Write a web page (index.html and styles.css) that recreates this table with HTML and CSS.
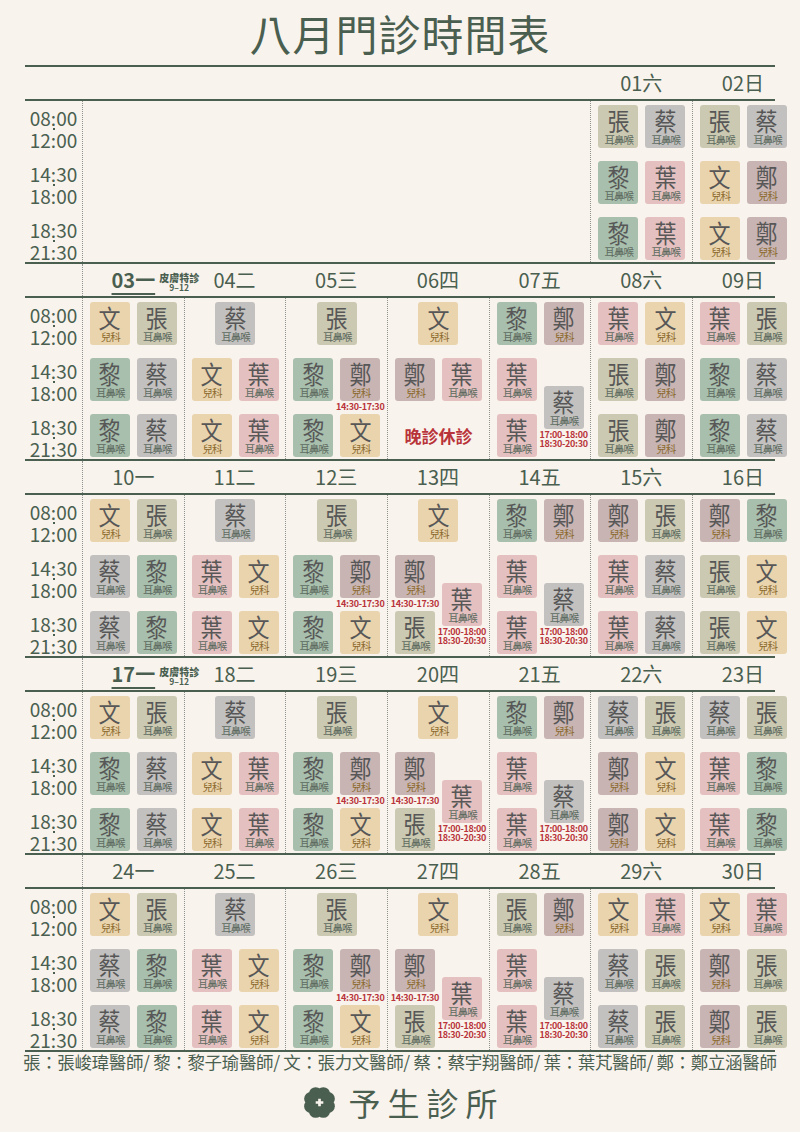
FILE: index.html
```html
<!DOCTYPE html>
<html lang="zh-Hant">
<head>
<meta charset="utf-8">
<title>八月門診時間表</title>
<link rel="stylesheet" href="styles.css">
</head>
<body>
<h1 class="title">八月門診時間表</h1>
<div class="sheet">

<section class="week">
  <div class="head">
    <div></div><div class="blank5"></div>
    <div class="dh">01六</div><div class="dh">02日</div>
  </div>
  <div class="body">
    <div class="times">
      <div class="t"><span>08:00</span><i></i><span>12:00</span></div>
      <div class="t"><span>14:30</span><i></i><span>18:00</span></div>
      <div class="t"><span>18:30</span><i></i><span>21:30</span></div>
    </div>
    <div class="blank5 line"></div>
    <div class="day">
      <div class="doc zh"><b>張</b><small>耳鼻喉</small></div>
      <div class="doc cai"><b>蔡</b><small>耳鼻喉</small></div>
      <div class="doc li"><b>黎</b><small>耳鼻喉</small></div>
      <div class="doc ye"><b>葉</b><small>耳鼻喉</small></div>
      <div class="doc li"><b>黎</b><small>耳鼻喉</small></div>
      <div class="doc ye"><b>葉</b><small>耳鼻喉</small></div>
    </div>
    <div class="day">
      <div class="doc zh"><b>張</b><small>耳鼻喉</small></div>
      <div class="doc cai"><b>蔡</b><small>耳鼻喉</small></div>
      <div class="doc wen"><b>文</b><small>兒科</small></div>
      <div class="doc zg"><b>鄭</b><small>兒科</small></div>
      <div class="doc wen"><b>文</b><small>兒科</small></div>
      <div class="doc zg"><b>鄭</b><small>兒科</small></div>
    </div>
  </div>
</section>

<section class="week">
  <div class="head">
    <div></div>
    <div class="dh"><span class="spday">03一<span class="tag"><b>皮膚特診</b><small>9–12</small></span></span></div>
    <div class="dh">04二</div><div class="dh">05三</div><div class="dh">06四</div>
    <div class="dh">07五</div><div class="dh">08六</div><div class="dh">09日</div>
  </div>
  <div class="body">
    <div class="times">
      <div class="t"><span>08:00</span><i></i><span>12:00</span></div>
      <div class="t"><span>14:30</span><i></i><span>18:00</span></div>
      <div class="t"><span>18:30</span><i></i><span>21:30</span></div>
    </div>
    <div class="day">
      <div class="doc wen"><b>文</b><small>兒科</small></div>
      <div class="doc zh"><b>張</b><small>耳鼻喉</small></div>
      <div class="doc li"><b>黎</b><small>耳鼻喉</small></div>
      <div class="doc cai"><b>蔡</b><small>耳鼻喉</small></div>
      <div class="doc li"><b>黎</b><small>耳鼻喉</small></div>
      <div class="doc cai"><b>蔡</b><small>耳鼻喉</small></div>
    </div>
    <div class="day">
      <div class="doc cai solo"><b>蔡</b><small>耳鼻喉</small></div>
      <div class="doc wen"><b>文</b><small>兒科</small></div>
      <div class="doc ye"><b>葉</b><small>耳鼻喉</small></div>
      <div class="doc wen"><b>文</b><small>兒科</small></div>
      <div class="doc ye"><b>葉</b><small>耳鼻喉</small></div>
    </div>
    <div class="day">
      <div class="doc zh solo"><b>張</b><small>耳鼻喉</small></div>
      <div class="doc li"><b>黎</b><small>耳鼻喉</small></div>
      <div class="doc zg"><b>鄭</b><small>兒科</small><span class="note">14:30-17:30</span></div>
      <div class="doc li"><b>黎</b><small>耳鼻喉</small></div>
      <div class="doc wen"><b>文</b><small>兒科</small></div>
    </div>
    <div class="day">
      <div class="doc wen solo"><b>文</b><small>兒科</small></div>
      <div class="doc zg"><b>鄭</b><small>兒科</small></div>
      <div class="doc ye"><b>葉</b><small>耳鼻喉</small></div>
      <div class="closed">晚診休診</div>
    </div>
    <div class="day">
      <div class="doc li"><b>黎</b><small>耳鼻喉</small></div>
      <div class="doc zg"><b>鄭</b><small>兒科</small></div>
      <div class="doc ye"><b>葉</b><small>耳鼻喉</small></div>
      <div class="doc cai mid"><b>蔡</b><small>耳鼻喉</small><span class="note">17:00-18:00<br>18:30-20:30</span></div>
      <div class="doc ye"><b>葉</b><small>耳鼻喉</small></div>
    </div>
    <div class="day">
      <div class="doc ye"><b>葉</b><small>耳鼻喉</small></div>
      <div class="doc wen"><b>文</b><small>兒科</small></div>
      <div class="doc zh"><b>張</b><small>耳鼻喉</small></div>
      <div class="doc zg"><b>鄭</b><small>兒科</small></div>
      <div class="doc zh"><b>張</b><small>耳鼻喉</small></div>
      <div class="doc zg"><b>鄭</b><small>兒科</small></div>
    </div>
    <div class="day">
      <div class="doc ye"><b>葉</b><small>耳鼻喉</small></div>
      <div class="doc zh"><b>張</b><small>耳鼻喉</small></div>
      <div class="doc li"><b>黎</b><small>耳鼻喉</small></div>
      <div class="doc cai"><b>蔡</b><small>耳鼻喉</small></div>
      <div class="doc li"><b>黎</b><small>耳鼻喉</small></div>
      <div class="doc cai"><b>蔡</b><small>耳鼻喉</small></div>
    </div>
  </div>
</section>

<section class="week">
  <div class="head">
    <div></div>
    <div class="dh">10一</div><div class="dh">11二</div><div class="dh">12三</div><div class="dh">13四</div>
    <div class="dh">14五</div><div class="dh">15六</div><div class="dh">16日</div>
  </div>
  <div class="body">
    <div class="times">
      <div class="t"><span>08:00</span><i></i><span>12:00</span></div>
      <div class="t"><span>14:30</span><i></i><span>18:00</span></div>
      <div class="t"><span>18:30</span><i></i><span>21:30</span></div>
    </div>
    <div class="day">
      <div class="doc wen"><b>文</b><small>兒科</small></div>
      <div class="doc zh"><b>張</b><small>耳鼻喉</small></div>
      <div class="doc cai"><b>蔡</b><small>耳鼻喉</small></div>
      <div class="doc li"><b>黎</b><small>耳鼻喉</small></div>
      <div class="doc cai"><b>蔡</b><small>耳鼻喉</small></div>
      <div class="doc li"><b>黎</b><small>耳鼻喉</small></div>
    </div>
    <div class="day">
      <div class="doc cai solo"><b>蔡</b><small>耳鼻喉</small></div>
      <div class="doc ye"><b>葉</b><small>耳鼻喉</small></div>
      <div class="doc wen"><b>文</b><small>兒科</small></div>
      <div class="doc ye"><b>葉</b><small>耳鼻喉</small></div>
      <div class="doc wen"><b>文</b><small>兒科</small></div>
    </div>
    <div class="day">
      <div class="doc zh solo"><b>張</b><small>耳鼻喉</small></div>
      <div class="doc li"><b>黎</b><small>耳鼻喉</small></div>
      <div class="doc zg"><b>鄭</b><small>兒科</small><span class="note">14:30-17:30</span></div>
      <div class="doc li"><b>黎</b><small>耳鼻喉</small></div>
      <div class="doc wen"><b>文</b><small>兒科</small></div>
    </div>
    <div class="day">
      <div class="doc wen solo"><b>文</b><small>兒科</small></div>
      <div class="doc zg"><b>鄭</b><small>兒科</small><span class="note">14:30-17:30</span></div>
      <div class="doc ye mid"><b>葉</b><small>耳鼻喉</small><span class="note">17:00-18:00<br>18:30-20:30</span></div>
      <div class="doc zh"><b>張</b><small>耳鼻喉</small></div>
    </div>
    <div class="day">
      <div class="doc li"><b>黎</b><small>耳鼻喉</small></div>
      <div class="doc zg"><b>鄭</b><small>兒科</small></div>
      <div class="doc ye"><b>葉</b><small>耳鼻喉</small></div>
      <div class="doc cai mid"><b>蔡</b><small>耳鼻喉</small><span class="note">17:00-18:00<br>18:30-20:30</span></div>
      <div class="doc ye"><b>葉</b><small>耳鼻喉</small></div>
    </div>
    <div class="day">
      <div class="doc zg"><b>鄭</b><small>兒科</small></div>
      <div class="doc zh"><b>張</b><small>耳鼻喉</small></div>
      <div class="doc ye"><b>葉</b><small>耳鼻喉</small></div>
      <div class="doc cai"><b>蔡</b><small>耳鼻喉</small></div>
      <div class="doc ye"><b>葉</b><small>耳鼻喉</small></div>
      <div class="doc cai"><b>蔡</b><small>耳鼻喉</small></div>
    </div>
    <div class="day">
      <div class="doc zg"><b>鄭</b><small>兒科</small></div>
      <div class="doc li"><b>黎</b><small>耳鼻喉</small></div>
      <div class="doc zh"><b>張</b><small>耳鼻喉</small></div>
      <div class="doc wen"><b>文</b><small>兒科</small></div>
      <div class="doc zh"><b>張</b><small>耳鼻喉</small></div>
      <div class="doc wen"><b>文</b><small>兒科</small></div>
    </div>
  </div>
</section>

<section class="week">
  <div class="head">
    <div></div>
    <div class="dh"><span class="spday">17一<span class="tag"><b>皮膚特診</b><small>9–12</small></span></span></div>
    <div class="dh">18二</div><div class="dh">19三</div><div class="dh">20四</div>
    <div class="dh">21五</div><div class="dh">22六</div><div class="dh">23日</div>
  </div>
  <div class="body">
    <div class="times">
      <div class="t"><span>08:00</span><i></i><span>12:00</span></div>
      <div class="t"><span>14:30</span><i></i><span>18:00</span></div>
      <div class="t"><span>18:30</span><i></i><span>21:30</span></div>
    </div>
    <div class="day">
      <div class="doc wen"><b>文</b><small>兒科</small></div>
      <div class="doc zh"><b>張</b><small>耳鼻喉</small></div>
      <div class="doc li"><b>黎</b><small>耳鼻喉</small></div>
      <div class="doc cai"><b>蔡</b><small>耳鼻喉</small></div>
      <div class="doc li"><b>黎</b><small>耳鼻喉</small></div>
      <div class="doc cai"><b>蔡</b><small>耳鼻喉</small></div>
    </div>
    <div class="day">
      <div class="doc cai solo"><b>蔡</b><small>耳鼻喉</small></div>
      <div class="doc wen"><b>文</b><small>兒科</small></div>
      <div class="doc ye"><b>葉</b><small>耳鼻喉</small></div>
      <div class="doc wen"><b>文</b><small>兒科</small></div>
      <div class="doc ye"><b>葉</b><small>耳鼻喉</small></div>
    </div>
    <div class="day">
      <div class="doc zh solo"><b>張</b><small>耳鼻喉</small></div>
      <div class="doc li"><b>黎</b><small>耳鼻喉</small></div>
      <div class="doc zg"><b>鄭</b><small>兒科</small><span class="note">14:30-17:30</span></div>
      <div class="doc li"><b>黎</b><small>耳鼻喉</small></div>
      <div class="doc wen"><b>文</b><small>兒科</small></div>
    </div>
    <div class="day">
      <div class="doc wen solo"><b>文</b><small>兒科</small></div>
      <div class="doc zg"><b>鄭</b><small>兒科</small><span class="note">14:30-17:30</span></div>
      <div class="doc ye mid"><b>葉</b><small>耳鼻喉</small><span class="note">17:00-18:00<br>18:30-20:30</span></div>
      <div class="doc zh"><b>張</b><small>耳鼻喉</small></div>
    </div>
    <div class="day">
      <div class="doc li"><b>黎</b><small>耳鼻喉</small></div>
      <div class="doc zg"><b>鄭</b><small>兒科</small></div>
      <div class="doc ye"><b>葉</b><small>耳鼻喉</small></div>
      <div class="doc cai mid"><b>蔡</b><small>耳鼻喉</small><span class="note">17:00-18:00<br>18:30-20:30</span></div>
      <div class="doc ye"><b>葉</b><small>耳鼻喉</small></div>
    </div>
    <div class="day">
      <div class="doc cai"><b>蔡</b><small>耳鼻喉</small></div>
      <div class="doc zh"><b>張</b><small>耳鼻喉</small></div>
      <div class="doc zg"><b>鄭</b><small>兒科</small></div>
      <div class="doc wen"><b>文</b><small>兒科</small></div>
      <div class="doc zg"><b>鄭</b><small>兒科</small></div>
      <div class="doc wen"><b>文</b><small>兒科</small></div>
    </div>
    <div class="day">
      <div class="doc cai"><b>蔡</b><small>耳鼻喉</small></div>
      <div class="doc zh"><b>張</b><small>耳鼻喉</small></div>
      <div class="doc ye"><b>葉</b><small>耳鼻喉</small></div>
      <div class="doc li"><b>黎</b><small>耳鼻喉</small></div>
      <div class="doc ye"><b>葉</b><small>耳鼻喉</small></div>
      <div class="doc li"><b>黎</b><small>耳鼻喉</small></div>
    </div>
  </div>
</section>

<section class="week last">
  <div class="head">
    <div></div>
    <div class="dh">24一</div><div class="dh">25二</div><div class="dh">26三</div><div class="dh">27四</div>
    <div class="dh">28五</div><div class="dh">29六</div><div class="dh">30日</div>
  </div>
  <div class="body">
    <div class="times">
      <div class="t"><span>08:00</span><i></i><span>12:00</span></div>
      <div class="t"><span>14:30</span><i></i><span>18:00</span></div>
      <div class="t"><span>18:30</span><i></i><span>21:30</span></div>
    </div>
    <div class="day">
      <div class="doc wen"><b>文</b><small>兒科</small></div>
      <div class="doc zh"><b>張</b><small>耳鼻喉</small></div>
      <div class="doc cai"><b>蔡</b><small>耳鼻喉</small></div>
      <div class="doc li"><b>黎</b><small>耳鼻喉</small></div>
      <div class="doc cai"><b>蔡</b><small>耳鼻喉</small></div>
      <div class="doc li"><b>黎</b><small>耳鼻喉</small></div>
    </div>
    <div class="day">
      <div class="doc cai solo"><b>蔡</b><small>耳鼻喉</small></div>
      <div class="doc ye"><b>葉</b><small>耳鼻喉</small></div>
      <div class="doc wen"><b>文</b><small>兒科</small></div>
      <div class="doc ye"><b>葉</b><small>耳鼻喉</small></div>
      <div class="doc wen"><b>文</b><small>兒科</small></div>
    </div>
    <div class="day">
      <div class="doc zh solo"><b>張</b><small>耳鼻喉</small></div>
      <div class="doc li"><b>黎</b><small>耳鼻喉</small></div>
      <div class="doc zg"><b>鄭</b><small>兒科</small><span class="note">14:30-17:30</span></div>
      <div class="doc li"><b>黎</b><small>耳鼻喉</small></div>
      <div class="doc wen"><b>文</b><small>兒科</small></div>
    </div>
    <div class="day">
      <div class="doc wen solo"><b>文</b><small>兒科</small></div>
      <div class="doc zg"><b>鄭</b><small>兒科</small><span class="note">14:30-17:30</span></div>
      <div class="doc ye mid"><b>葉</b><small>耳鼻喉</small><span class="note">17:00-18:00<br>18:30-20:30</span></div>
      <div class="doc zh"><b>張</b><small>耳鼻喉</small></div>
    </div>
    <div class="day">
      <div class="doc zh"><b>張</b><small>耳鼻喉</small></div>
      <div class="doc zg"><b>鄭</b><small>兒科</small></div>
      <div class="doc ye"><b>葉</b><small>耳鼻喉</small></div>
      <div class="doc cai mid"><b>蔡</b><small>耳鼻喉</small><span class="note">17:00-18:00<br>18:30-20:30</span></div>
      <div class="doc ye"><b>葉</b><small>耳鼻喉</small></div>
    </div>
    <div class="day">
      <div class="doc wen"><b>文</b><small>兒科</small></div>
      <div class="doc ye"><b>葉</b><small>耳鼻喉</small></div>
      <div class="doc cai"><b>蔡</b><small>耳鼻喉</small></div>
      <div class="doc zh"><b>張</b><small>耳鼻喉</small></div>
      <div class="doc cai"><b>蔡</b><small>耳鼻喉</small></div>
      <div class="doc zh"><b>張</b><small>耳鼻喉</small></div>
    </div>
    <div class="day">
      <div class="doc wen"><b>文</b><small>兒科</small></div>
      <div class="doc ye"><b>葉</b><small>耳鼻喉</small></div>
      <div class="doc zg"><b>鄭</b><small>兒科</small></div>
      <div class="doc zh"><b>張</b><small>耳鼻喉</small></div>
      <div class="doc zg"><b>鄭</b><small>兒科</small></div>
      <div class="doc zh"><b>張</b><small>耳鼻喉</small></div>
    </div>
  </div>
</section>

<p class="legend">張：張峻瑋醫師/ 黎：黎子瑜醫師/ 文：張力文醫師/ 蔡：蔡宇翔醫師/ 葉：葉芃醫師/ 鄭：鄭立涵醫師</p>
</div>

<footer class="brand">
  <svg class="flower" viewBox="0 0 32 32" width="35" height="33" aria-hidden="true">
    <g fill="#4a5f50">
      <circle cx="16" cy="16" r="9.5"/>
      <circle cx="19.7" cy="7.6" r="6.5"/>
      <circle cx="12.3" cy="7.6" r="6.5"/>
      <circle cx="19.7" cy="24.4" r="6.5"/>
      <circle cx="12.3" cy="24.4" r="6.5"/>
      <circle cx="24.4" cy="12.3" r="6.5"/>
      <circle cx="24.4" cy="19.7" r="6.5"/>
      <circle cx="7.6" cy="12.3" r="6.5"/>
      <circle cx="7.6" cy="19.7" r="6.5"/>
    </g>
    <path fill="#f9f3ed" d="M14.7 12.3h2.6v2.4h2.4v2.6h-2.4v2.4h-2.6v-2.4h-2.4v-2.6h2.4z"/>
  </svg>
  <span class="brand-name">予生診所</span>
</footer>
</body>
</html>
```

FILE: styles.css
```css
* { box-sizing: border-box; }

body {
  margin: 0;
  background: #f9f3ed;
  color: #4a5f50;
  font-family: "Noto Sans CJK TC", "Noto Sans", sans-serif;
}

.title {
  margin: 0;
  height: 65px;
  line-height: 66px;
  text-align: center;
  font-size: 42px;
  font-weight: 400;
  letter-spacing: 1px;
}

.sheet {
  margin-left: 25px;
  width: 750px;
}

.week { border-top: 2px solid #4a5f50; }
.week.last { border-bottom: 2px solid #4a5f50; }

.head,
.body {
  display: grid;
  grid-template-columns: 57px repeat(7, 101.7px);
}

.head {
  height: 34px;
  border-bottom: 2px solid #4a5f50;
}

.body { height: 161px; }

.blank5 { grid-column: span 5; }
.blank5.line { border-left: 1px dotted #8e928e; }

.dh {
  display: flex;
  align-items: center;
  justify-content: center;
  font-size: 20px;
  line-height: 20px;
}
.head > .dh:nth-child(2) { border-left: 1px dotted #8e928e; }

.spday {
  position: relative;
  font-weight: 700;
  text-decoration: underline;
  text-decoration-thickness: 2px;
  text-underline-offset: 5px;
}

.tag {
  position: absolute;
  left: calc(100% + 4px);
  top: 2px;
  display: flex;
  flex-direction: column;
  align-items: center;
  white-space: nowrap;
  font-weight: 700;
}
.tag b { font-size: 10px; line-height: 11px; }
.tag small { font-size: 8.5px; line-height: 9px; }

.times {
  display: grid;
  grid-template-rows: repeat(3, 43px);
  row-gap: 13px;
  padding-top: 4px;
}

.t {
  display: flex;
  flex-direction: column;
  align-items: center;
  padding-top: 4px;
  font-size: 19px;
  line-height: 17px;
}
.t i {
  display: block;
  width: 2px;
  height: 5px;
  margin: 1.5px 0;
  background: #4a5f50;
}

.day {
  border-left: 1px dotted #8e928e;
  display: grid;
  grid-template-columns: 40px 40px;
  grid-template-rows: repeat(3, 43px);
  gap: 13px 7px;
  justify-content: center;
  align-content: start;
  padding-top: 4px;
}

.doc {
  position: relative;
  width: 40px;
  height: 43px;
  border-radius: 3px;
  display: flex;
  flex-direction: column;
  align-items: center;
  padding-top: 2px;
}
.doc b {
  display: block;
  font-weight: 400;
  font-size: 25px;
  line-height: 27px;
  color: #575757;
  transform: scaleX(0.88);
}
.doc small {
  display: block;
  font-size: 10.5px;
  line-height: 12px;
  letter-spacing: -1px;
  margin-right: -1px;
  color: #5e6b60;
  white-space: nowrap;
}

.zh { background: #cbc9b1; }
.cai { background: #c2c1c0; }
.li { background: #a8bfad; }
.ye { background: #e4c1c0; }
.wen { background: #e9d4ae; }
.zg { background: #c7b4b3; }
.wen small,
.zg small { color: #8c6a2d; }

.solo { grid-column: 1 / -1; justify-self: center; }
.mid { grid-column: 2; grid-row: 2 / 4; align-self: center; }

.note {
  position: absolute;
  top: 100%;
  left: 50%;
  transform: translateX(-50%);
  padding-top: 1px;
  white-space: nowrap;
  text-align: center;
  font-size: 9px;
  line-height: 9px;
  font-weight: 700;
  letter-spacing: -0.3px;
  color: #b8343a;
}

.closed {
  grid-column: 1 / -1;
  align-self: center;
  justify-self: center;
  font-size: 17px;
  font-weight: 700;
  color: #b8343a;
}

.legend {
  margin: 0 0 0 -2px;
  font-size: 17.5px;
  line-height: 20px;
  letter-spacing: -0.35px;
  white-space: nowrap;
}

.brand {
  display: flex;
  justify-content: center;
  align-items: center;
  gap: 11px;
  margin-top: 10px;
  height: 40px;
}
.flower { display: block; }
.brand-name {
  font-size: 32px;
  line-height: 40px;
  letter-spacing: 7px;
  margin-right: -7px;
}
```
